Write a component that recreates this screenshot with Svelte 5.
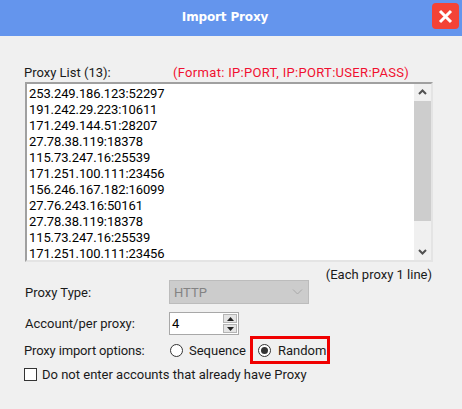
<script lang="ts">
	const proxies = [
		'253.249.186.123:52297',
		'191.242.29.223:10611',
		'171.249.144.51:28207',
		'27.78.38.119:18378',
		'115.73.247.16:25539',
		'171.251.100.111:23456',
		'156.246.167.182:16099',
		'27.76.243.16:50161',
		'27.78.38.119:18378',
		'115.73.247.16:25539',
		'171.251.100.111:23456'
	];
</script>

<div class="dialog">
	<header class="titlebar">
		<span class="title">Import Proxy</span>
		<button class="close" aria-label="Close">
			<svg width="15" height="15" viewBox="0 0 15 15">
				<path d="M2 2 L13 13 M13 2 L2 13" stroke="#fff" stroke-width="3" fill="none" />
			</svg>
		</button>
	</header>

	<main class="body">
		<div class="list-head">
			<span class="list-label">Proxy List (13):</span>
			<span class="format">(Format: IP:PORT, IP:PORT:USER:PASS)</span>
		</div>

		<div class="list-box">
			<div class="lines">
				{#each proxies as line}
					<div class="line">{line}</div>
				{/each}
			</div>
			<div class="scrollbar">
				<svg class="arrow" width="17" height="17" viewBox="0 0 17 17">
					<path d="M5 10 L8.5 6.5 L12 10" stroke="#505050" stroke-width="2" fill="none" />
				</svg>
				<div class="track"><div class="thumb"></div></div>
				<svg class="arrow" width="17" height="17" viewBox="0 0 17 17">
					<path d="M5 7 L8.5 10.5 L12 7" stroke="#505050" stroke-width="2" fill="none" />
				</svg>
			</div>
		</div>

		<div class="hint">(Each proxy 1 line)</div>

		<div class="row type-row">
			<span class="label">Proxy Type:</span>
			<div class="select">
				<span>HTTP</span>
				<svg width="11" height="6" viewBox="0 0 11 6">
					<path d="M1 0.5 L5.5 5 L10 0.5" stroke="#a8a8a8" stroke-width="1" fill="none" />
				</svg>
			</div>
		</div>

		<div class="row account-row">
			<span class="label">Account/per proxy:</span>
			<div class="spin">
				<span class="spin-value">4</span>
				<div class="spin-btns">
					<div class="spin-btn">
						<svg width="7" height="4" viewBox="0 0 7 4"><path d="M3.5 0 L7 4 L0 4 Z" fill="#222" /></svg>
					</div>
					<div class="spin-btn">
						<svg width="7" height="4" viewBox="0 0 7 4"><path d="M0 0 L7 0 L3.5 4 Z" fill="#222" /></svg>
					</div>
				</div>
			</div>
		</div>

		<div class="row options-row">
			<span class="label options-label">Proxy import options:</span>
			<div class="radio-item">
				<span class="radio"></span>
				<span>Sequence</span>
			</div>
			<div class="radio-item highlighted">
				<span class="radio checked"></span>
				<span>Random</span>
			</div>
		</div>

		<div class="check-row">
			<span class="checkbox"></span>
			<span>Do not enter accounts that already have Proxy</span>
		</div>
	</main>
</div>

<style>
	:global(body) {
		margin: 0;
		background: #f0f0f0;
	}

	.dialog {
		width: 462px;
		height: 409px;
		overflow: hidden;
		display: flex;
		flex-direction: column;
		background: #f0f0f0;
		font-family: Roboto, 'Liberation Sans', sans-serif;
		font-size: 13px;
		color: #1a1a1a;
	}

	.titlebar {
		height: 36px;
		flex-shrink: 0;
		position: relative;
		display: flex;
		align-items: center;
		justify-content: center;
		padding: 0 12px 2px 0;
		box-sizing: border-box;
		background: #6495ed;
	}

	.title {
		color: #fff;
		font-family: 'DejaVu Sans', sans-serif;
		font-size: 12px;
		font-weight: 700;
		letter-spacing: -0.15px;
	}

	.close {
		position: absolute;
		top: 3px;
		right: 3px;
		width: 27px;
		height: 26px;
		padding: 0;
		border: none;
		border-radius: 4px;
		background: #f44336;
		display: flex;
		align-items: center;
		justify-content: center;
	}

	.body {
		padding: 27px 29px 0 24px;
		display: flex;
		flex-direction: column;
	}

	.list-head {
		height: 19px;
		display: flex;
		align-items: center;
	}

	.list-label {
		width: 149px;
		flex-shrink: 0;
	}

	.format {
		color: #f01030;
		white-space: nowrap;
		letter-spacing: 0.31px;
	}

	.list-box {
		height: 176px;
		margin-left: 1px;
		display: flex;
		background: #fff;
		border: 2px solid;
		border-color: #a0a0a0 #e4e4e4 #e4e4e4 #a0a0a0;
		box-sizing: content-box;
	}

	.lines {
		flex: 1;
		padding: 2px 0 0 2px;
		overflow: hidden;
	}

	.line {
		height: 16px;
		line-height: 16px;
		color: #000;
		letter-spacing: -0.1px;
	}

	.scrollbar {
		width: 17px;
		display: flex;
		flex-direction: column;
		background: #f0f0f0;
	}

	.arrow {
		flex-shrink: 0;
	}

	.track {
		flex: 1;
	}

	.thumb {
		height: 120px;
		background: #cdcdcd;
	}

	.hint {
		height: 17px;
		line-height: 23px;
		margin: 1px 1px 0 0;
		text-align: right;
	}

	.row {
		display: flex;
		align-items: center;
	}

	.label {
		width: 145px;
		flex-shrink: 0;
		padding-left: 1px;
		box-sizing: border-box;
	}

	.options-label {
		padding-left: 0;
		letter-spacing: -0.15px;
	}

	.type-row {
		height: 24px;
	}

	.select {
		width: 140px;
		height: 24px;
		box-sizing: border-box;
		padding: 0 5px 0 4px;
		display: flex;
		align-items: center;
		justify-content: space-between;
		background: #cccccc;
		border: 1px solid #bcbcbc;
		color: #838383;
	}

	.account-row {
		height: 23px;
		margin-top: 8px;
	}

	.spin {
		width: 70px;
		height: 23px;
		box-sizing: border-box;
		padding: 0 1px 0 2px;
		display: flex;
		align-items: center;
		justify-content: space-between;
		background: #fff;
		border: 1px solid #a8a8a8;
		color: #000;
	}

	.spin-btns {
		display: flex;
		flex-direction: column;
		gap: 1px;
	}

	.spin-btn {
		width: 14px;
		height: 9px;
		display: flex;
		align-items: center;
		justify-content: center;
		background: #e4e4e4;
		border: 1px solid #b4b4b4;
		box-sizing: border-box;
	}

	.options-row {
		height: 28px;
		margin-top: 1px;
	}

	.radio-item {
		display: flex;
		align-items: center;
		gap: 6px;
		margin-left: 1px;
	}

	.highlighted {
		margin-left: 4px;
		height: 28px;
		box-sizing: border-box;
		padding: 0 1px 0 5px;
		gap: 7px;
		border: 3px solid #f00000;
	}

	.radio {
		width: 13px;
		height: 13px;
		border-radius: 50%;
		border: 1px solid #333;
		background: #fff;
		box-sizing: border-box;
		display: flex;
		align-items: center;
		justify-content: center;
	}

	.checked::after {
		content: '';
		width: 7px;
		height: 7px;
		border-radius: 50%;
		background: #333;
	}

	.check-row {
		margin-top: 2px;
		height: 17px;
		display: flex;
		align-items: center;
		gap: 5px;
	}

	.checkbox {
		width: 13px;
		height: 13px;
		box-sizing: border-box;
		background: #fff;
		border: 1px solid #333;
	}
</style>
